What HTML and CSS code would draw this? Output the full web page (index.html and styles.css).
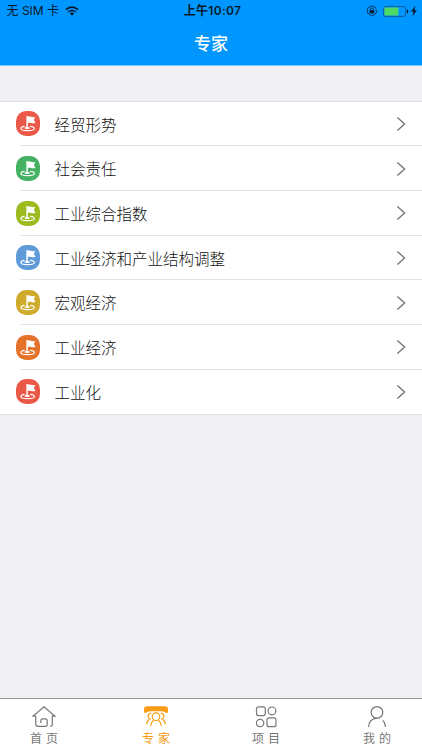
FILE: index.html
```
<!DOCTYPE html>
<html lang="zh-CN">
<head>
<meta charset="utf-8">
<title>专家</title>
<link rel="stylesheet" href="styles.css">
</head>
<body>
<svg class="defs" width="0" height="0" aria-hidden="true">
  <symbol id="flag" viewBox="0 0 24 25">
    <path d="M11.1 5V17.5" stroke="#fff" stroke-width="1.5" fill="none"/>
    <path d="M11.6 5.6c2.8-.5 3.6 1.1 7.6.5l-1.3 2.9 1.6 3c-3.4.8-4.9-.9-7.9-.2z" fill="#fff"/>
    <path d="M8.6 15.4c-2.3.3-3.7 1.1-3.7 2 0 1.3 2.9 2.2 6.6 2.2s6.9-.9 6.9-2.2c0-.9-1.6-1.7-4.2-2" stroke="#fff" stroke-width="1.15" fill="none"/>
    <ellipse cx="11.2" cy="17" rx="2.8" ry=".9" fill="#fff"/>
  </symbol>
  <symbol id="arrow" viewBox="0 0 10 16">
    <path d="M1.4 1.5 8.6 8 1.4 14.5" stroke="#707070" stroke-width="1.25" fill="none"/>
  </symbol>
</svg>
<div class="app">
  <header class="header">
    <div class="status">
      <div class="carrier"><span>无 SIM 卡</span>
        <svg width="14" height="10" viewBox="0 0 14 10" fill="none" stroke="#071a2b" stroke-width="1.6"><path d="M1 3.6a8.6 8.6 0 0 1 12 0M3.2 6a5.4 5.4 0 0 1 7.6 0"/><path d="M7 9.7 4.9 7.6a3 3 0 0 1 4.2 0z" fill="#071a2b" stroke="none"/></svg>
      </div>
      <div class="time">上午10:07</div>
      <div class="power">
        <svg width="12" height="12" viewBox="0 0 12 12" fill="none" stroke="#07355c"><path d="M10.4 7.2A4.7 4.7 0 1 1 10.3 4" stroke-width="1"/><path d="m9 5.3 2.7 0-1.3 2z" fill="#07355c" stroke="none"/><path d="M4.4 5.5V4.4a1.4 1.4 0 0 1 2.8 0v1.1"/><path d="M3.5 5.2h4.6v3.2H3.5z" fill="#071a2b" stroke="none"/></svg>
        <svg width="26" height="11" viewBox="0 0 26 11"><rect x=".6" y=".6" width="22" height="9.8" rx="1.8" fill="none" stroke="#0b5c9f"/><rect x="1.4" y="1.4" width="14" height="8.2" rx=".8" fill="#4cd964"/><path d="M23.8 3.6q1.5.2 1.5 1.9t-1.5 1.9z" fill="#071a2b"/></svg>
        <svg width="6" height="10" viewBox="0 0 6 10"><path d="M4.2 0 0 5.5h2.4L1.6 10 6 4.3H3.5z" fill="#071a2b"/></svg>
      </div>
    </div>
    <h1 class="title">专家</h1>
  </header>
  <main class="content">
    <ul class="list">
      <li class="row"><span class="badge red"><svg><use href="#flag"/></svg></span><div class="cell"><span>经贸形势</span><svg class="arrow"><use href="#arrow"/></svg></div></li>
      <li class="row"><span class="badge green"><svg><use href="#flag"/></svg></span><div class="cell"><span>社会责任</span><svg class="arrow"><use href="#arrow"/></svg></div></li>
      <li class="row"><span class="badge lime"><svg><use href="#flag"/></svg></span><div class="cell"><span>工业综合指数</span><svg class="arrow"><use href="#arrow"/></svg></div></li>
      <li class="row"><span class="badge blue"><svg><use href="#flag"/></svg></span><div class="cell"><span>工业经济和产业结构调整</span><svg class="arrow"><use href="#arrow"/></svg></div></li>
      <li class="row"><span class="badge gold"><svg><use href="#flag"/></svg></span><div class="cell"><span>宏观经济</span><svg class="arrow"><use href="#arrow"/></svg></div></li>
      <li class="row"><span class="badge orange"><svg><use href="#flag"/></svg></span><div class="cell"><span>工业经济</span><svg class="arrow"><use href="#arrow"/></svg></div></li>
      <li class="row"><span class="badge red"><svg><use href="#flag"/></svg></span><div class="cell"><span>工业化</span><svg class="arrow"><use href="#arrow"/></svg></div></li>
    </ul>
  </main>
  <nav class="tabs">
    <a class="tab"><svg viewBox="0 0 24 22"><path d="M3.8 10.2H.9L12 .9l11.1 9.3h-2.8v8.3q0 1.8-2 1.8M3.8 10.2v8.1q0 2 2 2h7.5q1.9 0 1.9-1.9v-4q0-1.6-1.6-1.6h-2.9q-1.8 0-1.8 1.8v2.3"/></svg><span>首页</span></a>
    <a class="tab active"><svg viewBox="0 0 24 22"><path d="M3 .3h18q3 0 3 3v3.4h-2.2q-1.2-1.5-3.8-1.5H6q-2.6 0-3.8 1.5H0V3.3q0-3 3-3z" fill="#f99b13" stroke="none"/><circle cx="12" cy="10.7" r="3.8" fill="#fff"/><path d="M6.7 20q.1-3.6 2.8-5.7M17.3 20q-.1-3.6-2.8-5.7M7.1 7.3q-3 .1-3 2.8 0 1.9 1.7 3-2.8 1.6-3.2 5.2M16.9 7.3q3 .1 3 2.8 0 1.9-1.7 3 2.8 1.6 3.2 5.2"/></svg><span>专家</span></a>
    <a class="tab"><svg viewBox="0 0 24 22"><rect x="2.5" y=".8" width="8.8" height="8.8" rx="2"/><circle cx="17.9" cy="4.9" r="3.9"/><circle cx="6.1" cy="17" r="3.7"/><rect x="13" y="11.9" width="9" height="8.8" rx="2"/></svg><span>项目</span></a>
    <a class="tab"><svg viewBox="0 0 24 22"><circle cx="12" cy="6.4" r="5.8"/><path d="M3.6 21q.2-8 8.4-8.8M17.9 14.3q2.4 2.4 2.6 6.7"/></svg><span>我的</span></a>
  </nav>
</div>
</body>
</html>
```
FILE: styles.css
```
* { box-sizing: border-box; }
body {
  margin: 0;
  font-family: "Noto Sans CJK SC", sans-serif;
  overflow: hidden;
}
.defs { position: absolute; }
.app {
  height: 750px;
  display: flex;
  flex-direction: column;
  background: #efeff4;
}
.header {
  height: 66px;
  background: #0096ff;
  border-bottom: 1px solid #7cc6fb;
}
.status {
  height: 22px;
  display: grid;
  grid-template-columns: 1fr auto 1fr;
  align-items: center;
  padding: 0 5px 0 6.5px;
  color: #071a2b;
  font-size: 12px;
  line-height: 22px;
}
.carrier, .power { display: flex; align-items: center; }
.carrier { gap: 6px; font-family: Inter, "Noto Sans CJK SC", sans-serif; }
.time {
  padding-left: 1.5px;
  font-family: Inter, "Noto Sans CJK SC", sans-serif;
  font-weight: 600;
  letter-spacing: .3px;
}
.power { justify-content: flex-end; gap: 5px; }
.power svg:last-child { margin-left: -3px; }
.title {
  margin: 0;
  color: #fff;
  text-align: center;
  font-size: 17px;
  font-weight: 500;
  line-height: 41px;
}
.content { flex: 1; padding-top: 34.5px; }
.list {
  margin: 0;
  padding: 0;
  list-style: none;
  background: #fff;
  border-top: 1px solid #dedee2;
  border-bottom: 1px solid #dedee2;
}
.row {
  height: 44.7px;
  display: flex;
  align-items: center;
  padding-left: 16px;
  background: linear-gradient(#e3e3e6, #e3e3e6) right bottom / calc(100% - 20px) 1px no-repeat;
}
.row:last-child { background: none; }
.badge {
  width: 24px;
  height: 25px;
  border-radius: 10px;
  flex: none;
}
.badge svg { display: block; width: 24px; height: 25px; }
.red { background: #ea5948; }
.green { background: #45b263; }
.lime { background: #9dbb1f; }
.blue { background: #5e9bd8; }
.gold { background: #cfab2b; }
.orange { background: #e5722a; }
.cell {
  flex: 1;
  display: flex;
  align-items: center;
  justify-content: space-between;
  padding: 0 16px 0 14.4px;
  color: #111;
  font-size: 15.5px;
  font-weight: 300;
  line-height: 22px;
}
.cell span { padding-bottom: .4px; }
.arrow { width: 10px; height: 16px; }
.tabs {
  height: 52px;
  display: grid;
  grid-template-columns: 111px 113px 107px 115px;
  margin-left: -11.5px;
  background: #fff;
  border-top: 1px solid #929298;
}
.tab {
  display: flex;
  flex-direction: column;
  align-items: center;
  padding-top: 7px;
  color: #777;
  font-size: 12px;
  line-height: 19px;
}
.tab svg {
  width: 24px;
  height: 22px;
  fill: none;
  stroke: #777;
  stroke-width: 1.2;
}
.tab span { letter-spacing: 4px; margin-right: -4px; }
.active { color: #f99b13; }
.tab.active svg { stroke: #f99b13; }
```
